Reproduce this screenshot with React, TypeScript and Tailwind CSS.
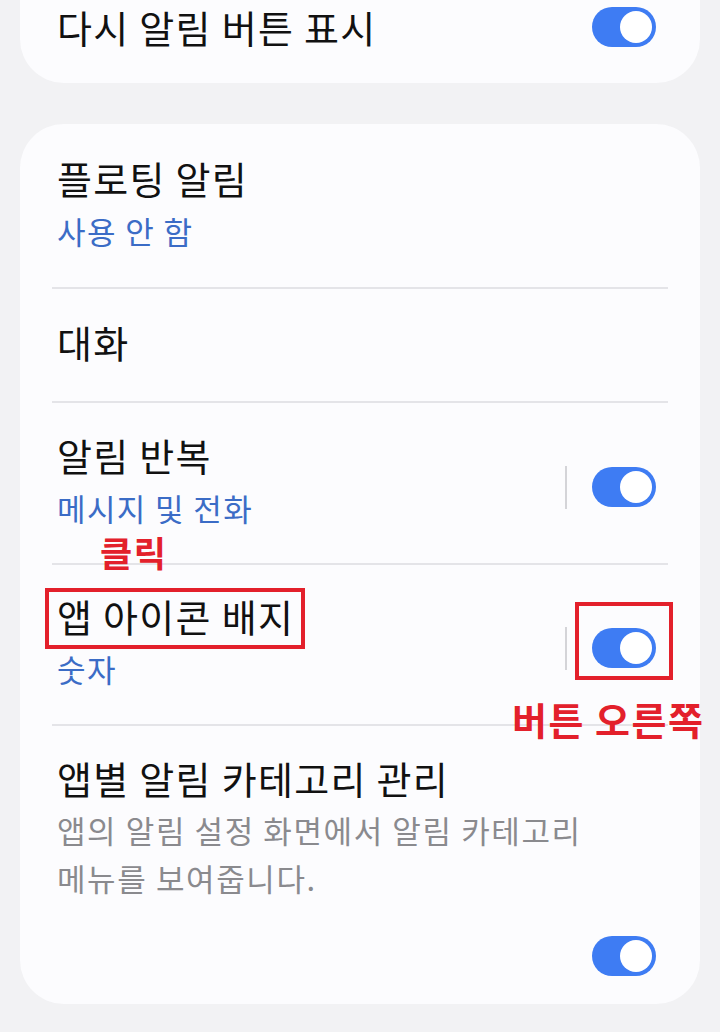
import React from "react";

const FONT = { fontFamily: '"Noto Sans CJK KR", "Noto Sans", sans-serif' };

function Toggle() {
  return (
    <div className="w-[64px] h-[40px] rounded-full bg-[#3e7cf3] flex items-center justify-end pr-[4px] shrink-0">
      <div className="w-[32px] h-[32px] rounded-full bg-white" />
    </div>
  );
}

function Sep() {
  return <div className="w-[2px] h-[43px] bg-[#d4d4d8] mr-[25px]" />;
}

function Divider() {
  return <div className="h-[2px] mx-[32px] bg-[#e4e4e8]" />;
}

const TITLE = "text-[38px] leading-[48px] tracking-[1.3px] text-[#111111]";
const SUB = "text-[31px] leading-[58px] tracking-[1.4px] text-[#3b6cc6]";

export default function App() {
  return (
    <div
      className="relative w-[720px] h-[1032px] overflow-hidden bg-[#f2f2f4]"
      style={FONT}
    >
      {/* Card 1 (cut off at top) */}
      <div className="mx-[20px] h-[83px] rounded-b-[44px] bg-[#fcfcfe]">
        <div className="flex items-center h-[53px] pl-[37px] pr-[44px]">
          <div className="flex-1 text-[38px] leading-[48px] tracking-[1.3px] text-[#111111]">
            다시 알림 버튼 표시
          </div>
          <Toggle />
        </div>
      </div>

      {/* Card 2 */}
      <div className="mx-[20px] mt-[41px] rounded-[44px] bg-[#fcfcfe]">
        <div className="pl-[37px] pr-[44px] pt-[30px] pb-[27px]">
          <div className={TITLE}>플로팅 알림</div>
          <div className={SUB}>사용 안 함</div>
        </div>
        <Divider />
        <div className="pl-[37px] pr-[44px] pt-[29px] pb-[35px]">
          <div className={TITLE}>대화</div>
        </div>
        <Divider />
        <div className="flex items-center pl-[37px] pr-[44px] pt-[31px] pb-[23px]">
          <div className="flex-1 -mt-[3px] mb-[3px]">
            <div className={TITLE}>알림 반복</div>
            <div className={SUB}>메시지 및 전화</div>
          </div>
          <Sep />
          <Toggle />
        </div>
        <Divider />
        <div className="flex items-center pl-[37px] pr-[44px] pt-[30px] pb-[23px]">
          <div className="flex-1 -mt-[3px] mb-[3px]">
            <div className={TITLE}>앱 아이콘 배지</div>
            <div className={SUB}>숫자</div>
          </div>
          <Sep />
          <Toggle />
        </div>
        <Divider />
        <div className="pl-[37px] pr-[44px] pt-[28px] pb-[28px]">
          <div className={TITLE}>앱별 알림 카테고리 관리</div>
          <div className="mt-[4px] text-[31px] leading-[48px] tracking-[1.6px] text-[#8a8a8e]">
            앱의 알림 설정 화면에서 알림 카테고리
            <br />
            메뉴를 보여줍니다.
          </div>
          <div className="mt-[34px] flex justify-end">
            <Toggle />
          </div>
        </div>
      </div>

      {/* Annotations */}
      <div className="absolute left-[100px] top-[529px] text-[35px] leading-[46px] tracking-[1.5px] font-bold text-[#e3202b]">
        클릭
      </div>
      <div className="absolute left-[45px] top-[588px] w-[260px] h-[61px] border-[4px] border-[#e3202b]" />
      <div className="absolute left-[575px] top-[602px] w-[98px] h-[78px] border-[4px] border-[#e3202b]" />
      <div className="absolute left-[512px] top-[694px] text-[38px] leading-[50px] tracking-[1.5px] font-bold text-[#e3202b] whitespace-nowrap">
        버튼 오른쪽
      </div>
    </div>
  );
}
